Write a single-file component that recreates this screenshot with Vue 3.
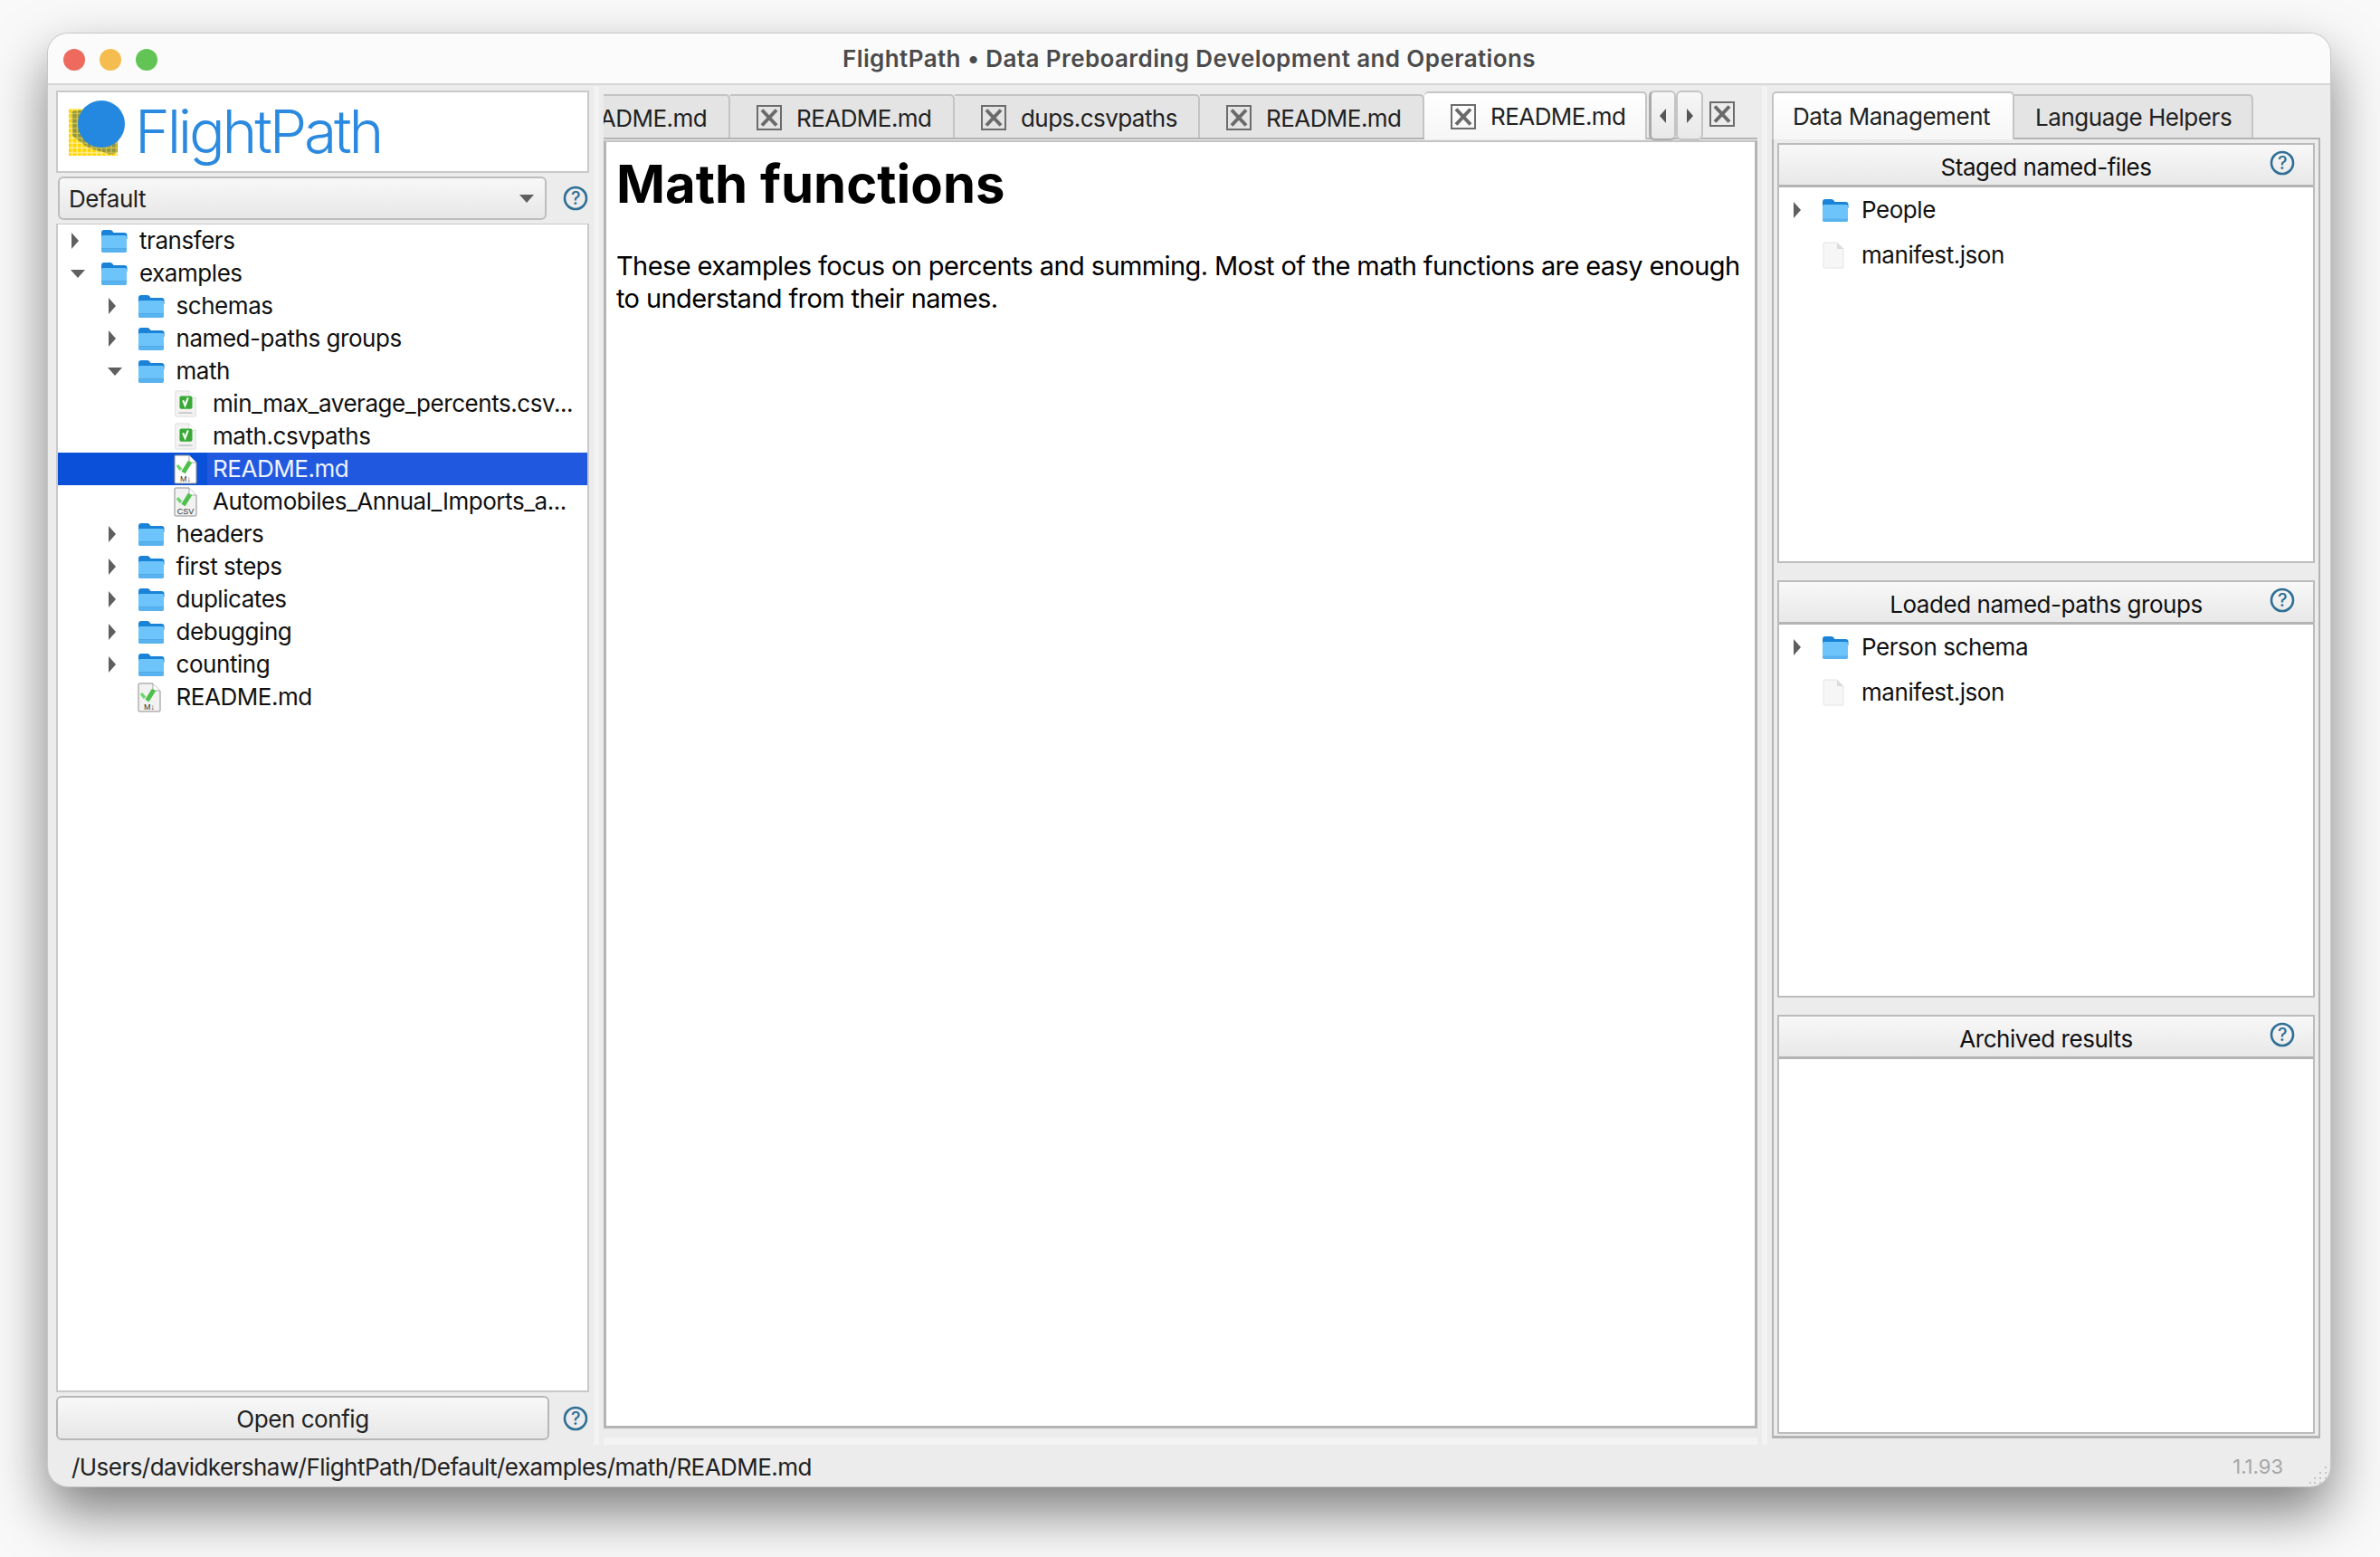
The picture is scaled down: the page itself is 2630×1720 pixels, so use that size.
<template>
  <div class="page">
    <div class="window">
      <header class="titlebar">
        <div class="lights">
          <span class="light red"></span>
          <span class="light yellow"></span>
          <span class="light green"></span>
        </div>
        <div class="wintitle">FlightPath • Data Preboarding Development and Operations</div>
      </header>

      <div class="body">
        <!-- left column -->
        <aside class="left">
          <div class="logo-box">
            <svg class="logo-mark" width="64" height="64" viewBox="0 0 64 64">
              <defs>
                <pattern id="ygrid" width="5.4" height="5.4" patternUnits="userSpaceOnUse">
                  <rect width="5.4" height="5.4" fill="#fff3a8" />
                  <rect width="4.2" height="4.2" fill="#ffd400" />
                </pattern>
                <pattern id="ogrid" width="5.4" height="5.4" patternUnits="userSpaceOnUse">
                  <rect width="5.4" height="5.4" fill="#d9c64a" />
                  <rect width="4.2" height="4.2" fill="#8f9640" />
                </pattern>
              </defs>
              <rect x="1" y="10" width="54" height="52" fill="url(#ygrid)" />
              <path d="M4 13 L5 40 L22 53 L48 61 L55 58 L55 30 L30 10 Z" fill="url(#ogrid)" />
              <ellipse cx="37" cy="27" rx="26" ry="26" fill="#2488e0" />
            </svg>
            <span class="logo-text">FlightPath</span>
          </div>

          <div class="combo-row">
            <div class="combo">
              <span>Default</span>
              <span class="combo-caret"></span>
            </div>
            <svg class="help" width="28" height="28" viewBox="0 0 28 28">
              <circle cx="14" cy="14" r="12" fill="none" stroke="#2f6f96" stroke-width="2.6" />
              <text x="14" y="21" text-anchor="middle" class="help-q">?</text>
            </svg>
          </div>

          <div class="tree">
            <div
              v-for="row in treeRows"
              :key="row.id"
              :class="['tree-row', { selected: row.selected }]"
              :style="{ paddingLeft: row.depth * 40.5 + 9 + 'px' }"
            >
              <span class="arrow-slot">
                <span v-if="row.arrow" :class="row.arrow === 'open' ? 'tri-down' : 'tri-right'"></span>
              </span>
              <span class="icon-slot">
                <svg v-if="row.icon === 'folder'" width="30" height="27" viewBox="0 0 30 27">
                  <path d="M1 4 q0 -3 3 -3 h7 q1.500 0 2.500 1.500 l1 1.500 h12 q3 0 3 3 v4 H1 Z" fill="#1a83d8" />
                  <rect x="1" y="7" width="28" height="19" rx="2" fill="#6cc4fb" />
                  <rect x="1" y="21" width="28" height="1.500" fill="#4fa9e6" />
                  <path d="M1 22.500 h28 v1.500 q0 2 -2 2 H3 q-2 0 -2 -2 Z" fill="#58b2ee" />
                </svg>
                <svg v-else-if="row.icon === 'badge'" width="26" height="30" viewBox="0 0 26 32">
                  <path d="M1 2 q0 -1 1 -1 h15 l8 8 v21 q0 1 -1 1 H2 q-1 0 -1 -1 Z" fill="#f3f3f3" stroke="#dcdcdc" />
                  <path d="M17 1 v8 h8" fill="#fff" stroke="#dcdcdc" />
                  <rect x="6" y="7" width="15" height="15" rx="2" fill="#37a935" />
                  <path d="M10 12 l2.500 6 l3.500 -9" fill="none" stroke="#fff" stroke-width="2.200" />
                  <rect x="5" y="26" width="16" height="1.500" fill="#bdbdbd" />
                </svg>
                <svg v-else width="26" height="33" viewBox="0 0 26 33">
                  <path d="M1 2 q0 -1 1 -1 h15 l8 8 v22 q0 1 -1 1 H2 q-1 0 -1 -1 Z" :fill="row.selected ? '#fff' : '#f2f2f2'" stroke="#8e8e8e" />
                  <path d="M17 1 v8 h8" fill="#fff" stroke="#a6a6a6" />
                  <path d="M4 12 L8 17" stroke="#6ed66c" stroke-width="3.500" />
                  <path d="M10.500 20 L18 8" stroke="#4cc04a" stroke-width="5" />
                  <text x="13" y="30" text-anchor="middle" class="doc-label">{{ row.label }}</text>
                </svg>
              </span>
              <span class="row-text">{{ row.text }}</span>
            </div>
          </div>

          <div class="combo-row config-row">
            <button class="config-btn">Open config</button>
            <svg class="help" width="28" height="28" viewBox="0 0 28 28">
              <circle cx="14" cy="14" r="12" fill="none" stroke="#2f6f96" stroke-width="2.6" />
              <text x="14" y="21" text-anchor="middle" class="help-q">?</text>
            </svg>
          </div>
        </aside>

        <div class="split"></div>

        <!-- middle -->
        <main class="middle">
          <div class="tabs">
            <div v-for="t in editorTabs" :key="t.id" :class="['tab', t.cls]">
              <svg v-if="!t.clipped" class="x-box" width="28" height="28" viewBox="0 0 28 28">
                <rect x="1" y="1" width="26" height="26" fill="none" stroke="#6c6c6c" stroke-width="2" />
                <path d="M6 5.500 L22 22.500 M22 5.500 L6 22.500" stroke="#6a6a6a" stroke-width="4" />
              </svg>
              <span>{{ t.text }}</span>
            </div>
            <div class="nav-btn first"><span class="mini-left"></span></div>
            <div class="nav-btn"><span class="mini-right"></span></div>
            <svg class="x-box tabs-close" width="28" height="28" viewBox="0 0 28 28">
              <rect x="1" y="1" width="26" height="26" fill="none" stroke="#6c6c6c" stroke-width="2" />
              <path d="M6 5.500 L22 22.500 M22 5.500 L6 22.500" stroke="#6a6a6a" stroke-width="4" />
            </svg>
          </div>
          <div class="doc-frame">
            <article class="doc">
              <h1>Math functions</h1>
              <p>These examples focus on percents and summing. Most of the math functions are easy enough to understand from their names.</p>
            </article>
          </div>
          <div class="handle"></div>
        </main>

        <div class="split"></div>

        <!-- right -->
        <section class="right">
          <div class="right-tabs">
            <div class="rtab active">Data Management</div>
            <div class="rtab">Language Helpers</div>
          </div>
          <div class="right-pane">
            <div v-for="(p, i) in panels" :key="p.title" :class="['panel', 'panel-' + i]">
              <div class="panel-head">
                <span>{{ p.title }}</span>
                <svg class="panel-help" width="28" height="28" viewBox="0 0 28 28">
                  <circle cx="14" cy="14" r="12" fill="none" stroke="#2f6f96" stroke-width="2.6" />
                  <text x="14" y="21" text-anchor="middle" class="help-q">?</text>
                </svg>
              </div>
              <div v-for="r in p.rows" :key="r.text" class="panel-row">
                <span class="arrow-slot small">
                  <span v-if="r.folder" class="tri-right"></span>
                </span>
                <span class="icon-slot">
                  <svg v-if="r.folder" width="30" height="27" viewBox="0 0 30 27">
                    <path d="M1 4 q0 -3 3 -3 h7 q1.500 0 2.500 1.500 l1 1.500 h12 q3 0 3 3 v4 H1 Z" fill="#1a83d8" />
                    <rect x="1" y="7" width="28" height="19" rx="2" fill="#6cc4fb" />
                    <path d="M1 22.500 h28 v1.500 q0 2 -2 2 H3 q-2 0 -2 -2 Z" fill="#58b2ee" />
                  </svg>
                  <svg v-else width="26" height="30" viewBox="0 0 26 30">
                    <path d="M2 2 q0 -1 1 -1 h14 l7 7 v20 q0 1 -1 1 H3 q-1 0 -1 -1 Z" fill="#f6f6f6" stroke="#e4e4e4" />
                    <path d="M17 1 v7 h7" fill="#dcdcdc" />
                  </svg>
                </span>
                <span class="row-text">{{ r.text }}</span>
              </div>
            </div>
          </div>
        </section>
      </div>

      <footer class="status">
        <span class="status-path">/Users/davidkershaw/FlightPath/Default/examples/math/README.md</span>
        <span class="version">1.1.93</span>
        <svg class="grip" width="22" height="22" viewBox="0 0 22 22">
          <g fill="#c4c4c4">
            <rect x="18" y="2" width="2" height="2" />
            <rect x="18" y="8" width="2" height="2" /><rect x="12" y="8" width="2" height="2" />
            <rect x="18" y="14" width="2" height="2" /><rect x="12" y="14" width="2" height="2" /><rect x="6" y="14" width="2" height="2" />
            <rect x="12" y="19" width="2" height="2" /><rect x="6" y="19" width="2" height="2" /><rect x="1" y="19" width="2" height="2" />
          </g>
        </svg>
      </footer>
    </div>
  </div>
</template>

<script setup>
const treeRows = [
  { id: 1, depth: 0, arrow: 'closed', icon: 'folder', text: 'transfers' },
  { id: 2, depth: 0, arrow: 'open', icon: 'folder', text: 'examples' },
  { id: 3, depth: 1, arrow: 'closed', icon: 'folder', text: 'schemas' },
  { id: 4, depth: 1, arrow: 'closed', icon: 'folder', text: 'named-paths groups' },
  { id: 5, depth: 1, arrow: 'open', icon: 'folder', text: 'math' },
  { id: 6, depth: 2, icon: 'badge', text: 'min_max_average_percents.csv...' },
  { id: 7, depth: 2, icon: 'badge', text: 'math.csvpaths' },
  { id: 8, depth: 2, icon: 'doc', label: 'M↓', text: 'README.md', selected: true },
  { id: 9, depth: 2, icon: 'doc', label: 'CSV', text: 'Automobiles_Annual_Imports_a...' },
  { id: 10, depth: 1, arrow: 'closed', icon: 'folder', text: 'headers' },
  { id: 11, depth: 1, arrow: 'closed', icon: 'folder', text: 'first steps' },
  { id: 12, depth: 1, arrow: 'closed', icon: 'folder', text: 'duplicates' },
  { id: 13, depth: 1, arrow: 'closed', icon: 'folder', text: 'debugging' },
  { id: 14, depth: 1, arrow: 'closed', icon: 'folder', text: 'counting' },
  { id: 15, depth: 1, icon: 'doc', label: 'M↓', text: 'README.md' }
]

const editorTabs = [
  { id: 1, text: 'ADME.md', clipped: true, cls: 'clipped' },
  { id: 2, text: 'README.md', cls: 't2' },
  { id: 3, text: 'dups.csvpaths', cls: 't3' },
  { id: 4, text: 'README.md', cls: 't4' },
  { id: 5, text: 'README.md', cls: 'current' }
]

const panels = [
  { title: 'Staged named-files', rows: [{ text: 'People', folder: true }, { text: 'manifest.json' }] },
  { title: 'Loaded named-paths groups', rows: [{ text: 'Person schema', folder: true }, { text: 'manifest.json' }] },
  { title: 'Archived results', rows: [] }
]
</script>

<style>
html, body { margin: 0; background: #f9f9f9; }
</style>

<style scoped>
.page {
  width: 2630px;
  height: 1720px;
  box-sizing: border-box;
  padding: 37px 55px 78px 53px;
  overflow: hidden;
  font-family: 'Inter', 'Liberation Sans', sans-serif;
  font-size: 26px;
  letter-spacing: -0.45px;
  color: #111;
}

.window {
  height: 100%;
  display: flex;
  flex-direction: column;
  background: #ececec;
  border-radius: 22px;
  box-shadow: 0 0 0 1px #c8c8c8, 0 28px 60px rgba(0, 0, 0, 0.5);
  overflow: hidden;
}

.titlebar {
  flex: none;
  height: 55px;
  display: flex;
  align-items: center;
  position: relative;
  justify-content: center;
  background: #fbfbfb;
  border-bottom: 2px solid #d6d6d6;
}

.lights { position: absolute; left: 17px; top: 17px; display: flex; gap: 16px; }
.light { width: 24px; height: 24px; border-radius: 50%; }
.red { background: #ee6a5f; }
.yellow { background: #f5bd4f; }
.green { background: #61c454; }

.wintitle { font-size: 26px; font-weight: 600; color: #4b4b4b; letter-spacing: 0.4px; }

.body { flex: 1; display: flex; min-height: 0; padding-top: 6px; }

/* left */
.left { width: 589px; margin-left: 9px; display: flex; flex-direction: column; flex: none; }

.logo-box {
  height: 91px;
  flex: none;
  box-sizing: border-box;
  background: #fff;
  border: 2px solid #c9c9c9;
  display: flex;
  align-items: center;
}
.logo-mark { margin-left: 11px; margin-top: 8px; align-self: flex-start; flex: none; }
.logo-text {
  margin-left: 10px;
  margin-top: -2px;
  font-size: 66px;
  font-weight: 300;
  color: #2b8ae0;
  letter-spacing: -3.2px;
}

.combo-row { display: flex; align-items: center; margin-top: 4px; height: 48px; flex: none; }
.combo {
  width: 540px;
  height: 48px;
  margin-left: 2px;
  box-sizing: border-box;
  border: 2px solid #bdbdbd;
  border-radius: 6px;
  background: linear-gradient(#f8f8f8, #e7e7e7);
  display: flex;
  align-items: center;
  justify-content: space-between;
  padding: 0 12px 0 10px;
  color: #222;
}
.combo-caret {
  width: 0; height: 0;
  border-left: 8px solid transparent;
  border-right: 8px solid transparent;
  border-top: 9px solid #5f5f5f;
}
.help { margin-left: 18px; flex: none; }
.help-q { font-family: 'Inter', sans-serif; font-size: 20px; font-weight: 500; fill: #2f6f96; }

.tree {
  flex: none;
  height: 1291px;
  margin-top: 4px;
  box-sizing: border-box;
  background: #fff;
  border: 2px solid #c9c9c9;
  border-top-width: 1px;
  overflow: hidden;
}

.tree-row { height: 36px; display: flex; align-items: center; white-space: nowrap; }
.tree-row.selected { background: #0b50d9; color: #eef3ff; }
.tree-row.selected .row-text { flex: 1; margin-left: -6px; padding-left: 6px; background: #2059df; }

.arrow-slot { width: 38px; flex: none; display: flex; align-items: center; padding-left: 5px; box-sizing: border-box; }
.tri-right {
  width: 0; height: 0;
  border-top: 9px solid transparent;
  border-bottom: 9px solid transparent;
  border-left: 8px solid #5f5f5f;
  margin-left: 1px;
}
.tri-down {
  width: 0; height: 0;
  border-left: 8px solid transparent;
  border-right: 8px solid transparent;
  border-top: 9px solid #5f5f5f;
}

.icon-slot { width: 43px; flex: none; display: flex; align-items: center; }
.doc-label { font-family: 'Liberation Sans', sans-serif; font-size: 9px; letter-spacing: 0; fill: #333; }
.row-text { line-height: 36px; }

.config-row { height: 49px; }
.config-btn {
  width: 545px;
  height: 49px;
  box-sizing: border-box;
  border: 2px solid #b8b8b8;
  border-radius: 6px;
  background: linear-gradient(#f8f8f8, #e7e7e7);
  font: inherit;
  letter-spacing: inherit;
  color: #222;
  padding: 2px 0 0;
}
.config-row .help { margin-left: 15px; }

.split { flex: none; width: 6px; margin: -4px 5px 0; background: #f3f3f3; }

/* middle */
.middle { width: 1275px; flex: none; display: flex; flex-direction: column; }
.tabs {
  height: 50px;
  flex: none;
  box-sizing: border-box;
  display: flex;
  align-items: flex-start;
  margin-top: 4px;
  border-bottom: 2px solid #b4b4b4;
}
.tab {
  height: 48px;
  box-sizing: border-box;
  background: #e4e4e4;
  border: 2px solid #c4c4c4;
  border-left: none;
  border-bottom: none;
  border-radius: 0 5px 0 0;
  display: flex;
  align-items: center;
  gap: 16px;
  padding-top: 2px;
  letter-spacing: -0.55px;
  color: #222;
  white-space: nowrap;
  overflow: hidden;
  flex: none;
}
.tab.clipped { width: 140px; justify-content: flex-end; padding-right: 24px; }
.tab.t2 { width: 248px; padding-left: 29px; }
.tab.t3 { width: 271px; padding-left: 29px; }
.tab.t4 { width: 248px; padding-left: 29px; }
.tab.current {
  width: 246px;
  padding: 0 0 0 29px;
  background: linear-gradient(#ffffff, #f6f6f6);
  height: 53px;
  margin-top: -3px;
  border-radius: 5px 5px 0 0;
  position: relative;
}

.nav-btn {
  width: 30px;
  height: 55px;
  margin-top: -4px;
  flex: none;
  box-sizing: border-box;
  border: 2px solid #c4c4c4;
  border-radius: 6px;
  background: linear-gradient(#f7f7f7, #e8e8e8);
  display: flex;
  align-items: center;
  justify-content: center;
  position: relative;
}
.nav-btn.first { margin-left: 2px; border-left-color: #aaa; border-bottom-color: #aaa; border-left-width: 3px; }
.mini-left { width: 0; height: 0; border-top: 8px solid transparent; border-bottom: 8px solid transparent; border-right: 7px solid #555; }
.mini-right { width: 0; height: 0; border-top: 8px solid transparent; border-bottom: 8px solid transparent; border-left: 7px solid #555; }
.tabs-close { margin: 8px 0 0 7px; flex: none; }
.x-box { flex: none; }

.doc-frame {
  flex: none;
  height: 1423px;
  margin-top: 1px;
  box-sizing: border-box;
  border: 3px solid #b4b4b4;
  border-top: 2px solid #c4c4c4;
  background: #fff;
}
.doc { padding: 0 9px 0 11px; }
.doc h1 { margin: 0; padding-top: 11px; font-size: 58px; line-height: 70px; font-weight: 700; letter-spacing: 0; color: #000; }
.doc p { margin: 38px 0 0; font-size: 29px; line-height: 36px; letter-spacing: -0.6px; color: #000; }

.handle { height: 8px; margin-top: 10px; background: #f3f3f3; flex: none; }

/* right */
.right { width: 606px; flex: none; display: flex; flex-direction: column; }
.right-tabs { display: flex; height: 51px; flex: none; margin-top: 1px; align-items: flex-start; }
.rtab {
  box-sizing: border-box;
  height: 48px;
  margin-top: 3px;
  padding-left: 23px;
  width: 264px;
  background: #e4e4e4;
  border: 2px solid #c4c4c4;
  border-bottom: none;
  border-left: none;
  border-radius: 0 5px 0 0;
  display: flex;
  align-items: center;
  color: #222;
}
.rtab.active {
  height: 53px;
  margin-top: 0;
  width: 268px;
  padding-left: 21px;
  background: linear-gradient(#ffffff, #f6f6f6);
  border-left: 2px solid #c4c4c4;
  border-radius: 5px 5px 0 0;
  position: relative;
  z-index: 1;
}

.right-pane {
  flex: none;
  height: 1437px;
  box-sizing: border-box;
  border: 2px solid #b4b4b4;
  border-bottom-width: 3px;
  padding: 4px 4px 2px;
  display: flex;
  flex-direction: column;
}

.panel { background: #fff; border: 2px solid #bcbcbc; box-sizing: border-box; flex: none; }
.panel-0 { height: 464px; }
.panel-1 { height: 461px; margin-top: 19px; }
.panel-2 { height: 463px; margin-top: 19px; }

.panel-head {
  height: 47px;
  box-sizing: border-box;
  border-bottom: 3px solid #b4b4b4;
  background: linear-gradient(#f8f8f8, #e8e8e8);
  display: flex;
  align-items: center;
  justify-content: center;
  position: relative;
  color: #111;
  padding-top: 5px;
}
.panel-help { position: absolute; right: 20px; top: 6px; }

.panel-row { height: 50px; display: flex; align-items: center; padding-left: 3px; }
.panel-row .arrow-slot { width: 44px; padding-left: 12px; }
.panel-row .icon-slot { width: 44px; }

.status {
  flex: none;
  height: 46px;
  box-sizing: border-box;
  padding: 2px 52px 0 26px;
  display: flex;
  align-items: center;
  justify-content: space-between;
  position: relative;
  color: #222;
}
.status-path { letter-spacing: -0.55px; }
.version { font-size: 22px; letter-spacing: 0; color: #a6a6a6; }
.grip { position: absolute; right: 2px; bottom: 2px; }
</style>
